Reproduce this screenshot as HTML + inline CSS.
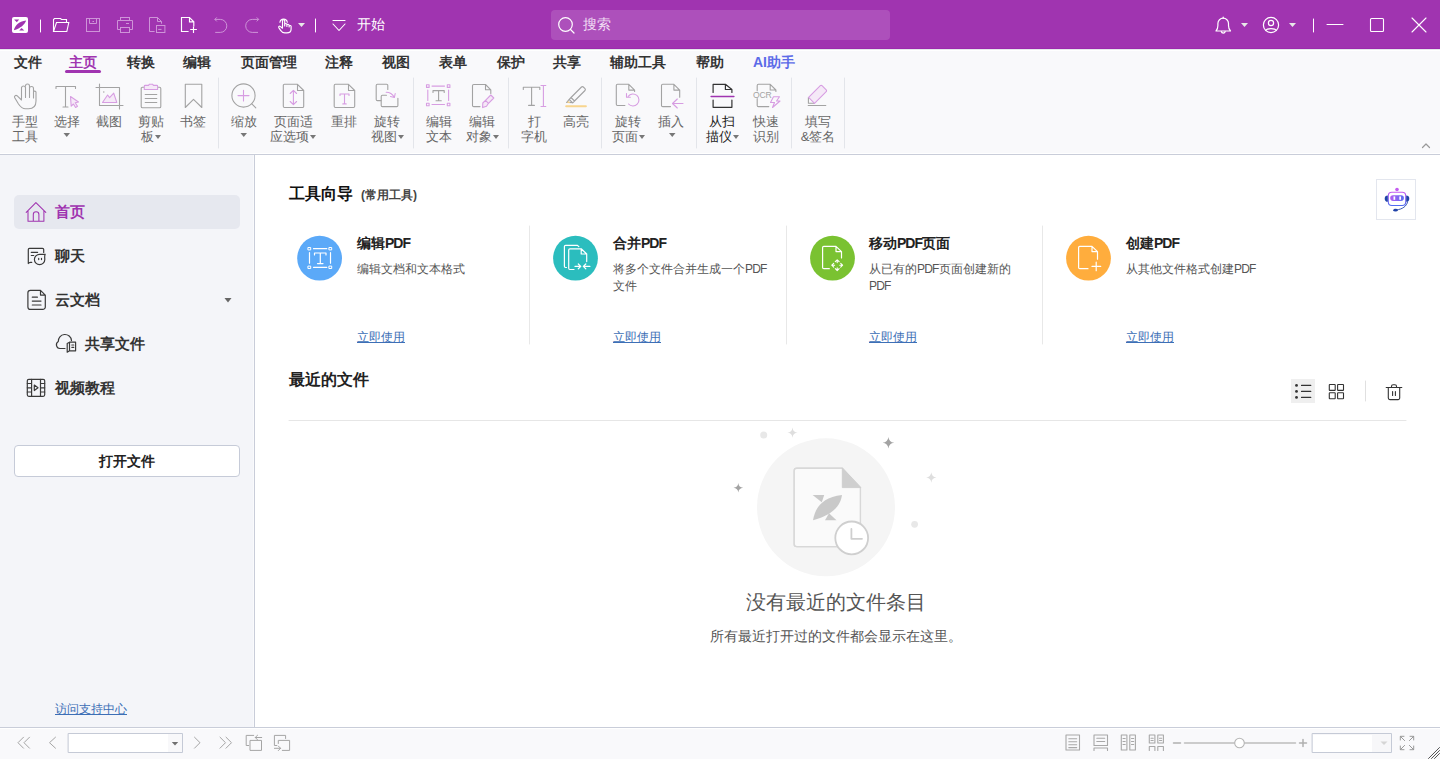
<!DOCTYPE html>
<html><head><meta charset="utf-8">
<style>
*{margin:0;padding:0;box-sizing:border-box}
html,body{width:1440px;height:759px;overflow:hidden;background:#fff;font-family:"Liberation Sans",sans-serif;color:#333}
.abs{position:absolute}
svg{position:absolute;overflow:visible}
#title{left:0;top:0;width:1440px;height:49px;background:#A034B0;border-bottom:1px solid #9C2BAD}
#menu{left:0;top:49px;width:1440px;height:106px;background:#F9F9FB;border-bottom:1px solid #C9CDD9;box-shadow:inset 0 -1px 0 #fff,inset 0 1px 0 #E4E9EA,inset 0 2px 0 #fff}
.tab{position:absolute;top:53px;font-size:14px;font-weight:bold;color:#333;line-height:18px;white-space:nowrap}
.rl{position:absolute;font-size:13px;color:#666;line-height:15px;text-align:center;white-space:nowrap}
.sep{position:absolute;top:78px;width:1px;height:70px;background:#E3E5EA}
#side{left:0;top:155px;width:255px;height:572px;background:#F4F5F9;border-right:1px solid #C9CDD9;box-shadow:inset -1px 0 0 #F9FAFC}
.si{position:absolute;font-size:15px;font-weight:bold;color:#333;line-height:20px;white-space:nowrap}
#status{left:0;top:727px;width:1440px;height:32px;background:#F9F9FB;border-top:1px solid #C9CDD9;box-shadow:inset 0 1px 0 #fff}
.card-t{position:absolute;font-size:14px;font-weight:bold;color:#222;line-height:18px;white-space:nowrap}
.card-d{position:absolute;font-size:12px;color:#555;line-height:17px;width:160px}
.link{position:absolute;font-size:12px;color:#3D6FB6;text-decoration:underline;line-height:16px;white-space:nowrap}
.div{position:absolute;top:226px;width:1px;height:118px;background:#E6E6E6}
.dd{display:inline-block;width:0;height:0;border-left:3.5px solid transparent;border-right:3.5px solid transparent;border-top:4px solid #777;vertical-align:middle;margin-left:1px;margin-top:-2px}
</style></head><body>
<div id="title" class="abs"></div>
<div id="menu" class="abs"></div>
<div id="side" class="abs"></div>
<div id="status" class="abs"></div>

<svg style="left:0;top:0" width="1440" height="48" viewBox="0 0 1440 48" fill="none" stroke-linecap="round" stroke-linejoin="round">
 <!-- logo -->
 <rect x="12" y="17" width="16" height="16" rx="2" fill="#fff"/>
 <g transform="translate(12 17)" fill="#A034B0"><path d="M2.1 2.5 H7.2 L4.8 5.2 Z"/><path d="M1.9 13.2 C2.8 8.6 6.5 4.6 14.2 3.5 C12.6 7.6 8.8 11.2 1.9 13.2 Z"/><path d="M7.2 13.5 H12.3 L9.6 10.9 Z"/></g>
 <line x1="40.5" y1="20" x2="40.5" y2="32" stroke="#fff" stroke-width="1"/>
 <!-- folder -->
 <path d="M53.5 31.5 V19.5 L54.5 18.5 H60.5 L61.5 19.5 H66.5 V22.5" stroke="#fff" stroke-width="1.1" stroke-linecap="butt" stroke-linejoin="miter"/>
 <path d="M53.5 31.5 L56.5 22.5 H68.8 L66.8 31.5 Z" stroke="#fff" stroke-width="1.1" stroke-linejoin="miter"/>
 <!-- save disabled -->
 <g stroke="#CE94D8" stroke-width="1" stroke-linecap="butt" stroke-linejoin="miter">
 <rect x="86.5" y="18.5" width="13" height="13"/>
 <path d="M89.5 18.5 V23.5 H96.5 V18.5"/>
 <line x1="92.5" y1="21.5" x2="94" y2="21.5"/>
 <!-- print -->
 <rect x="120.5" y="17.5" width="9" height="3"/>
 <path d="M120.5 29.5 H117.5 V20.5 H132.5 V29.5 H129.5"/>
 <rect x="120.5" y="27.5" width="9" height="5"/>
 <line x1="126" y1="23.5" x2="129" y2="23.5"/>
 <!-- doc with minus -->
 <path d="M154.6 31.5 H149.5 V17.5 H157.5 L161.5 21.5 V23.7 M157.5 17.5 V21.5 H161.5"/>
 <rect x="156.5" y="25.5" width="8.4" height="7"/>
 <line x1="158.2" y1="29.4" x2="161.5" y2="29.4"/>
 <!-- undo / redo -->
 <path d="M214.8 19.4 H220.3 A6.5 6.5 0 0 1 220.3 32.4 H215.2 M216.8 17.4 L214.8 19.4 L216.8 21.4"/>
 <path d="M258.7 19.4 H252.2 A6.5 6.5 0 0 0 252.2 32.4 H258 M256.7 17.4 L258.7 19.4 L256.7 21.4"/>
 </g>
 <!-- new doc -->
 <path d="M188.6 31.5 H181.5 V17.5 H189.5 L193.8 21.8 V26.6 M189.5 17.5 V21.8 H193.8" stroke="#fff" stroke-width="1.15" stroke-linecap="butt" stroke-linejoin="miter"/>
 <path d="M190.2 29.5 H196.9 M193.5 26.4 V33" stroke="#fff" stroke-width="1.15" stroke-linecap="butt"/>
 <!-- hand -->
 <path d="M282.5 27.5 V20.9 A1.1 1.1 0 0 1 284.7 20.9 V26 M284.7 24.6 A1.1 1.1 0 0 1 286.9 24.6 V26.5 M286.9 25.4 A1.1 1.1 0 0 1 289.1 25.4 V27 M289.1 26.3 A1 1 0 0 1 291.1 26.8 V29.3 C291.1 31.6 289.3 32.9 286.8 32.9 H284.8 C282.8 32.9 281.6 31.9 280.6 30.4 L278.8 27.6 C278.3 26.7 279.3 25.8 280.2 26.4 L282.5 28.2" stroke="#fff" stroke-width="1.15"/>
 <path d="M279.9 22.3 A3.75 3.75 0 0 1 287.3 22.3" stroke="#fff" stroke-width="1.1"/>
 <path d="M298 23 H305 L301.5 27 Z" fill="#E8E8E8" stroke="none"/>
 <line x1="315.5" y1="19" x2="315.5" y2="32" stroke="#fff" stroke-width="1"/>
 <!-- start dropdown -->
 <line x1="333" y1="20.5" x2="345" y2="20.5" stroke="#fff" stroke-width="1.1"/>
 <path d="M333 24 L339 30.5 L345 24" stroke="#fff" stroke-width="1.1"/>
 <!-- search -->
 <rect x="551" y="10" width="339" height="30" rx="4" fill="#FFFFFF" fill-opacity="0.14" stroke="none"/>
 <circle cx="565.5" cy="24.5" r="6.8" stroke="#fff" stroke-width="1.2"/>
 <line x1="570.5" y1="29.5" x2="574" y2="33" stroke="#fff" stroke-width="1.2"/>
 <!-- bell -->
 <path d="M1216 31 H1230.5 C1229 29.5 1228.5 28 1228.5 25.5 V23.5 A5.3 5.3 0 0 0 1217.9 23.5 V25.5 C1217.9 28 1217.5 29.5 1216 31 Z" stroke="#fff" stroke-width="1.2"/>
 <path d="M1221.3 31.5 A2 2 0 0 0 1225.2 31.5" stroke="#fff" stroke-width="1.2"/>
 <line x1="1223.2" y1="17" x2="1223.2" y2="18.3" stroke="#fff" stroke-width="1.2"/>
 <path d="M1241 23 H1248 L1244.5 27 Z" fill="#E8E8E8" stroke="none"/>
 <!-- user -->
 <circle cx="1271" cy="25" r="7.6" stroke="#fff" stroke-width="1.2"/>
 <circle cx="1271" cy="23" r="2.6" stroke="#fff" stroke-width="1.2"/>
 <path d="M1265.8 30.5 C1267 28 1275 28 1276.2 30.5" stroke="#fff" stroke-width="1.2"/>
 <path d="M1289 23 H1296 L1292.5 27 Z" fill="#E8E8E8" stroke="none"/>
 <line x1="1313.5" y1="19" x2="1313.5" y2="32" stroke="#fff" stroke-width="1"/>
 <line x1="1327" y1="24.5" x2="1343" y2="24.5" stroke="#fff" stroke-width="1"/>
 <rect x="1370.5" y="18.5" width="13" height="13" rx="1" stroke="#fff" stroke-width="1.1"/>
 <path d="M1412 18 L1426 32 M1426 18 L1412 32" stroke="#fff" stroke-width="1.1"/>
</svg>
<div class="abs" style="left:357px;top:15px;font-size:14px;color:#fff;line-height:18px">开始</div>
<div class="abs" style="left:583px;top:15px;font-size:14px;color:#F0DDF3;line-height:18px">搜索</div>

<div class="tab" style="left:14px">文件</div>
<div class="tab" style="left:69px;color:#A034B0">主页</div>
<div class="tab" style="left:127px">转换</div>
<div class="tab" style="left:183px">编辑</div>
<div class="tab" style="left:241px">页面管理</div>
<div class="tab" style="left:325px">注释</div>
<div class="tab" style="left:382px">视图</div>
<div class="tab" style="left:439px">表单</div>
<div class="tab" style="left:497px">保护</div>
<div class="tab" style="left:553px">共享</div>
<div class="tab" style="left:610px">辅助工具</div>
<div class="tab" style="left:696px">帮助</div>
<div class="tab" style="left:753px;color:#5C6BE8">AI助手</div>
<div class="abs" style="left:65px;top:70px;width:36px;height:3px;border-radius:2px;background:#A034B0"></div>
<div class="rl" style="left:-25px;top:114px;width:100px;color:#666">手型<br>工具</div>
<div class="rl" style="left:17px;top:114px;width:100px;color:#666">选择</div>
<div class="rl" style="left:59px;top:114px;width:100px;color:#666">截图</div>
<div class="rl" style="left:101px;top:114px;width:100px;color:#666">剪贴<br>板<span class="dd"></span></div>
<div class="rl" style="left:143px;top:114px;width:100px;color:#666">书签</div>
<div class="rl" style="left:194px;top:114px;width:100px;color:#666">缩放</div>
<div class="rl" style="left:243px;top:114px;width:100px;color:#666">页面适<br>应选项<span class="dd"></span></div>
<div class="rl" style="left:294px;top:114px;width:100px;color:#666">重排</div>
<div class="rl" style="left:337px;top:114px;width:100px;color:#666">旋转<br>视图<span class="dd"></span></div>
<div class="rl" style="left:389px;top:114px;width:100px;color:#666">编辑<br>文本</div>
<div class="rl" style="left:432px;top:114px;width:100px;color:#666">编辑<br>对象<span class="dd"></span></div>
<div class="rl" style="left:484px;top:114px;width:100px;color:#666">打<br>字机</div>
<div class="rl" style="left:526px;top:114px;width:100px;color:#666">高亮</div>
<div class="rl" style="left:578px;top:114px;width:100px;color:#666">旋转<br>页面<span class="dd"></span></div>
<div class="rl" style="left:621px;top:114px;width:100px;color:#666">插入</div>
<div class="rl" style="left:672px;top:114px;width:100px;color:#222">从扫<br>描仪<span class="dd"></span></div>
<div class="rl" style="left:716px;top:114px;width:100px;color:#666">快速<br>识别</div>
<div class="rl" style="left:768px;top:114px;width:100px;color:#666">填写<br>&签名</div>

<svg style="left:0;top:0" width="1440" height="759" viewBox="0 0 1440 759" fill="none" stroke-linecap="round" stroke-linejoin="round">
<g stroke="#A3A3A3" stroke-width="1.1">
 <!-- hand -->
 <path d="M21.5 99 V87.5 A2.1 2.1 0 0 1 25.5 87.5 V97.5 M25.5 86 A2 2 0 0 1 29.5 86 V97.5 M29.5 88.5 A2 2 0 0 1 33.5 88.5 V98 M33.5 91.5 A1.6 1.6 0 0 1 36 92 V101 C36 105.5 33.5 108.8 28.5 108.8 H25.5 C22.5 108.8 20.5 107 18.5 104 L14.6 97.5 C14 96.3 15.5 94.8 17 95.7 L21.5 100"/>
 <!-- T select -->
 <path d="M56 88.5 V86.5 H75.5 V88.5 M65.5 86.5 V107 M63 107 H68"/>
 <!-- crop -->
 <path d="M99.5 84 V105.5 H123 M96 87.5 H119.5 V109"/>
 <circle cx="103.8" cy="92" r="0.7" fill="#A3A3A3" stroke="none"/>
 <!-- clipboard -->
 <path d="M144 87.3 H142.5 A1.3 1.3 0 0 0 141.2 88.6 V106.5 A1.3 1.3 0 0 0 142.5 107.8 H159.5 A1.3 1.3 0 0 0 160.8 106.5 V88.6 A1.3 1.3 0 0 0 159.5 87.3 H158"/>
 <path d="M145.2 94.5 H156.8 M145.2 98.5 H156.8 M145.2 102.5 H156.8"/>
 <!-- bookmark -->
 <path d="M185.3 84.3 H201.8 V107.5 L193.5 99.3 L185.3 107.5 Z"/>
 <!-- zoom -->
 <circle cx="243.5" cy="95.5" r="11.6"/>
 <path d="M251.8 103.8 L255.8 107.8"/>
 <!-- page fit -->
 <path d="M297.5 84.3 H284.5 A1.2 1.2 0 0 0 283.3 85.5 V106.3 A1.2 1.2 0 0 0 284.5 107.5 H302.5 A1.2 1.2 0 0 0 303.7 106.3 V90.5 Z M297.5 84.3 V90.5 H303.7"/>
 <!-- reflow -->
 <path d="M348.5 84.3 H335.4 A1.2 1.2 0 0 0 334.2 85.5 V106.3 A1.2 1.2 0 0 0 335.4 107.5 H353.5 A1.2 1.2 0 0 0 354.7 106.3 V90.5 Z M348.5 84.3 V90.5 H354.7"/>
 <!-- rotate view -->
 <path d="M381 100.6 H377.4 A1.2 1.2 0 0 1 376.2 99.4 V85.5 A1.2 1.2 0 0 1 377.4 84.3 H386.6 A1.2 1.2 0 0 1 387.8 85.5 V89.5"/>
 <path d="M386.5 95.3 H382.4 A1.2 1.2 0 0 0 381.2 96.5 V105.4 A1.2 1.2 0 0 0 382.4 106.6 H396.7 A1.2 1.2 0 0 0 397.9 105.4 V98.3"/>
 <!-- edit text T -->
 <path d="M433 92.5 V90.6 H444.2 V92.5 M438.6 90.6 V100.7 M436 100.7 H441.3"/>
 <!-- edit object doc -->
 <path d="M480 106.6 H473.7 A1.2 1.2 0 0 1 472.5 105.4 V85.7 A1.2 1.2 0 0 1 473.7 84.5 H485.5 L490.8 89.8 V93.5 M485.5 84.5 V89.8 H490.8"/>
 <!-- typewriter T -->
 <path d="M523.3 89.5 V87.3 H539.8 V89.5 M531.6 87.3 V105.4 M528.6 105.4 H534.4"/>
 <!-- highlighter -->
 <path d="M571 97.5 L581.5 87 A1.3 1.3 0 0 1 583.3 87 L585 88.7 A1.3 1.3 0 0 1 585 90.5 L574.5 101 Z M571 97.5 L569.2 99.3 L572.7 102.8 L574.5 101 M569.2 99.3 L566.6 102.5 L569.8 102.4 L572.7 102.8"/>
 <!-- rotate page doc -->
 <path d="M624.9 105.5 H617.5 A1.2 1.2 0 0 1 616.3 104.3 V85.5 A1.2 1.2 0 0 1 617.5 84.3 H628.8 L634.6 90.1 V91.5 M628.8 84.3 V90.1 H634.6"/>
 <!-- insert doc -->
 <path d="M670.5 106.6 H662.7 A1.2 1.2 0 0 1 661.5 105.4 V85.5 A1.2 1.2 0 0 1 662.7 84.3 H673.9 L679.7 90.1 V97.2 M673.9 84.3 V90.1 H679.7"/>
 <!-- OCR doc -->
 <path d="M757.2 90.8 V85.5 A1.2 1.2 0 0 1 758.4 84.3 H770.2 L775.9 90 V91.5 M770.2 84.3 V90 H775.9 M757.2 98.5 V105.4 A1.2 1.2 0 0 0 758.4 106.6 H768.8"/>
 <!-- fill sign base -->
 <path d="M808.2 105.5 H825.8 M808.4 97.6 V103.3 H814.2"/>
</g>
<g stroke="#D79DE2" stroke-width="1.1">
 <path d="M70.5 96.5 L78.5 102 L75.2 102.8 L77.5 106.3 L75.6 107.5 L73.4 104 L71.2 106.2 Z" fill="#F5E9F7"/>
 <path d="M102.5 102.5 L107.6 95 L109.6 97.7 L113.7 93.2 L116.8 102.5 Z" fill="#F5E9F7"/>
 <path d="M144.3 89.5 V86.2 A0.8 0.8 0 0 1 145.1 85.4 H148.5 L149.5 84.2 H152.5 L153.5 85.4 H156.8 A0.8 0.8 0 0 1 157.6 86.2 V89.5 Z" fill="#F5E9F7"/>
 <path d="M238 95.6 H249 M243.5 90.2 V101"/>
 <path d="M293.4 90.5 V104.5 M290.2 93.5 L293.4 90.3 L296.6 93.5 M290.2 101.5 L293.4 104.7 L296.6 101.5"/>
 <path d="M340 95.5 V94 H349 V95.5 M344.5 94 V103.9 M342.8 103.9 H346.2"/>
 <path d="M386.2 92.2 C389.5 92.2 392.5 94 394.3 97.3 M390.5 96.5 L394.4 97.5 L395.2 93.5"/>
 <path d="M432 86.1 H444.5 M432 104.5 H444.5 M427.8 90 V100.5 M448.6 90 V100.5"/>
 <rect x="426.5" y="84.8" width="2.6" height="2.6"/><rect x="447.3" y="84.8" width="2.6" height="2.6"/>
 <rect x="426.5" y="103.2" width="2.6" height="2.6"/><rect x="447.3" y="103.2" width="2.6" height="2.6"/>
 <path d="M485.5 100.3 L490.8 95 L493.8 98 L488.5 103.3 Z M485.5 100.3 L482.8 103 L482.6 107.6 L486.5 106.3 L488.5 103.3" fill="#F5E9F7"/>
 <path d="M543.4 85.5 V106.5 M541 85.5 H545.8 M541 106.5 H545.8"/>
 <path d="M628.2 96.3 A6 6 0 1 1 628.5 104" /><path d="M626.5 93.5 V97.3 H630.3"/>
 <path d="M672.5 103.5 H683 M677.3 99 L672.5 103.5 L677.3 108"/>
 <path d="M773.5 96.8 H779.5 L776.5 101 H780 L772.5 107.5 L774.5 102.5 H770.5 Z"/>
 <path d="M808.6 97.4 L820.3 85.7 A1.2 1.2 0 0 1 822 85.7 L826.2 89.9 A1.2 1.2 0 0 1 826.2 91.6 L814.5 103.3 Z" fill="#F5E9F7"/>
</g>
<path d="M566.2 106.2 H585.9" stroke="#F8D58E" stroke-width="2"/>
<path d="M568 100.8 L570.5 103.3 L567.2 103" fill="#F8D58E"/>
<!-- scan dark -->
<g stroke="#333" stroke-width="1.2">
 <path d="M713.1 92.5 V84.3 H725.4 L731.9 89.5 V92.5 M725.4 84.3 V89.5 H731.9 M713.1 100 V107.3 H731.9 V100"/>
</g>
<path d="M711.1 96.4 H733.9" stroke="#A034B0" stroke-width="1.5"/>
<text x="753" y="97.6" font-family="Liberation Sans" font-size="8.6" fill="#A3A3A3" letter-spacing="-0.2">OCR</text>
<!-- separators -->
<g stroke="#E3E5EA" stroke-width="1">
 <path d="M218.5 78 V148 M413.5 78 V148 M508.5 78 V148 M601.5 78 V148 M696.5 78 V148 M791.5 78 V148 M844.5 78 V148"/>
</g>
<!-- dropdown triangles -->
<g fill="#777">
 <path d="M63.5 133 H70 L66.75 137 Z"/>
 <path d="M240.5 133 H247 L243.75 137 Z"/>
 <path d="M669 133 H675.5 L672.25 137 Z"/>
</g>
</svg>

<div class="abs" style="left:14px;top:195px;width:226px;height:34px;border-radius:5px;background:#E6E8EF"></div>
<div class="abs" style="left:14px;top:445px;width:226px;height:32px;border-radius:4px;background:#fff;border:1px solid #C6CBD8"></div>
<div class="abs" style="left:1376px;top:179px;width:40px;height:41px;background:#fff;border:1px solid #E3E6EE"></div>
<div class="abs" style="left:1291px;top:379px;width:24px;height:24px;background:#EFEFEF"></div>
<svg style="left:0;top:0" width="1440" height="759" viewBox="0 0 1440 759" fill="none" stroke-linecap="round" stroke-linejoin="round">
 <!-- home -->
 <path d="M26.2 212.4 L35.9 202.6 L45.8 212.4 M28 210.5 V221.3 H43.9 V210.5 M33.3 221.3 V214.5 A2.8 2.8 0 0 1 38.9 214.5 V221.3" stroke="#A034B0" stroke-width="1.05"/>
 <g stroke="#3A3A3A" stroke-width="1.2">
 <!-- chat -->
 <path d="M31.8 262.3 H30.5 C29.5 262.3 28.7 262.8 28.3 263.5 V249.6 A1.2 1.2 0 0 1 29.5 248.4 H42.5 A1.2 1.2 0 0 1 43.7 249.6 V252.5"/>
 <path d="M31.3 252.4 H37.6 M31.3 255.5 H33.7"/>
 <path d="M45.2 254.3 H39.6 A5.2 5.2 0 1 0 44.8 259.5 C44.8 257.5 44.3 255.8 45.2 254.3 Z"/>
 <path d="M38.7 258.4 V259.6 M41.5 258.4 V259.6"/>
 <!-- doc -->
 <path d="M40.5 290.3 H30.4 A2.5 2.5 0 0 0 27.9 292.8 V306.9 A2.5 2.5 0 0 0 30.4 309.4 H42.8 A2.5 2.5 0 0 0 45.3 306.9 V295.1 Z M40.5 290.3 V295.1 H45.3"/>
 <path d="M32.3 297.2 H37.4 M32.3 301.1 H41 M32.3 305 H41"/>
 <!-- cloud -->
 <path d="M65 348.5 H59.8 A3.7 3.7 0 0 1 58.3 341.6 A6.6 6.6 0 0 1 71.5 340.6"/>
 <path d="M67.2 343.5 L69.5 342.2 H75.6 V350.8 H69.5 L67.2 352.2 Z M69.5 342.2 V350.8 M71.8 345 H73.8 M71.8 347.3 H73.8"/>
 <!-- film -->
 <rect x="27.3" y="379.3" width="17.4" height="17" rx="1.5"/>
 <path d="M31.6 379.3 V396.3 M40.5 379.3 V396.3 M27.3 383.5 H31.6 M27.3 387.8 H31.6 M27.3 392 H31.6 M40.5 383.5 H44.7 M40.5 387.8 H44.7 M40.5 392 H44.7"/>
 <path d="M34.3 385 L38 387.8 L34.3 390.5 Z"/>
 </g>
 
 <path d="M224.5 298 H231.5 L228 302.5 Z" fill="#666"/>
 <!-- card icons -->
 <circle cx="319.6" cy="258.2" r="22.4" fill="#5BA9F8"/>
 <circle cx="575.5" cy="258.2" r="22.4" fill="#2BBDBE"/>
 <circle cx="832.5" cy="258.2" r="22.4" fill="#7AC231"/>
 <circle cx="1088.5" cy="258.2" r="22.4" fill="#FFAD3D"/>
 <g stroke="#fff" stroke-width="1.2">
  <rect x="308.3" y="247.5" width="2.4" height="2.4" stroke-width="1"/><rect x="329.3" y="247.5" width="2.4" height="2.4" stroke-width="1"/>
  <rect x="308.3" y="266.1" width="2.4" height="2.4" stroke-width="1"/><rect x="329.3" y="266.1" width="2.4" height="2.4" stroke-width="1"/>
  <path d="M313.5 248.7 H326.8 M313.5 267.3 H326.8 M309.5 252.5 V263.2 M330.5 252.5 V263.2"/>
  <path d="M314.5 255 V253 H326 V255 M320.3 253 V263.6 M317.5 263.6 H323"/>
  <path d="M566.5 267.5 H565.6 A1.2 1.2 0 0 1 564.4 266.3 V246.6 A1.2 1.2 0 0 1 565.6 245.4 H577.5 L578.8 246.7"/>
  <path d="M574 269.5 H569.9 A1.2 1.2 0 0 1 568.7 268.3 V250 A1.2 1.2 0 0 1 569.9 248.8 H581.2 L586.7 254 V261.6 M581.2 248.8 V254 H586.7"/>
  <path d="M575 266.4 H580.5 M578.3 264 L580.8 266.4 L578.3 268.8 M589.9 266.4 H583.5 M585.8 264 L583.3 266.4 L585.8 268.8"/>
  <path d="M829.3 268.7 H823.8 A1.2 1.2 0 0 1 822.6 267.5 V247.6 A1.2 1.2 0 0 1 823.8 246.4 H836 L841.5 251.6 V258 M836 246.4 V251.6 H841.5"/>
  <path d="M837.2 259.8 V262.6 M837.2 267.8 V270.6 M831.8 265.2 H834.6 M839.8 265.2 H842.6 M835.3 261.7 L837.2 259.8 L839.1 261.7 M835.3 268.7 L837.2 270.6 L839.1 268.7 M833.7 263.3 L831.8 265.2 L833.7 267.1 M840.7 263.3 L842.6 265.2 L840.7 267.1" stroke-width="1.1"/>
  <path d="M1088 268.7 H1079.8 A1.2 1.2 0 0 1 1078.6 267.5 V247.6 A1.2 1.2 0 0 1 1079.8 246.4 H1092 L1097.5 251.6 V259.2 M1092 246.4 V251.6 H1097.5"/>
  <path d="M1092 266.4 H1100.7 M1096.2 262.2 V270.7"/>
 </g>
 <!-- robot -->
 <defs><linearGradient id="rg" x1="0" y1="0" x2="0" y2="1"><stop offset="0" stop-color="#C45BF0"/><stop offset="1" stop-color="#4F6BF2"/></linearGradient>
 <linearGradient id="rg2" x1="0" y1="0" x2="1" y2="0"><stop offset="0" stop-color="#B45CF2"/><stop offset="1" stop-color="#5B6EF2"/></linearGradient></defs>
 <circle cx="1397" cy="189.5" r="1.8" fill="#C45BF0"/>
 <rect x="1388.3" y="192.2" width="17.4" height="13.3" rx="3.5" stroke="url(#rg)" stroke-width="1.1"/>
 <rect x="1390.2" y="195.2" width="13.7" height="5.7" rx="2.8" fill="url(#rg2)"/>
 <rect x="1393.5" y="196.4" width="1.7" height="3.4" fill="#fff"/><rect x="1399.3" y="196.4" width="1.7" height="3.4" fill="#fff"/>
 <path d="M1387.8 195.6 A3 3 0 0 0 1387.8 201.8 Z" fill="#2143A8"/>
 <path d="M1406.2 195.6 A3 3 0 0 1 1406.2 201.8 Z" fill="#2143A8"/>
 <path d="M1407.5 202 C1407 206 1402 209.5 1397 209.8" stroke="#2143A8" stroke-width="0.9"/>
 <ellipse cx="1395.5" cy="210.2" rx="2.2" ry="1.4" fill="#2143A8"/>
 <!-- recent icons -->
 <g fill="#333"><circle cx="1296.5" cy="385.4" r="1.4"/><circle cx="1296.5" cy="391.4" r="1.4"/><circle cx="1296.5" cy="397.4" r="1.4"/></g>
 <path d="M1301.5 385.4 H1310.8 M1301.5 391.4 H1310.8 M1301.5 397.4 H1310.8" stroke="#333" stroke-width="1.1"/>
 <g stroke="#333" stroke-width="1.1"><rect x="1329.3" y="384.5" width="5.9" height="5.9" rx="0.5"/><rect x="1337.6" y="384.5" width="5.9" height="5.9" rx="0.5"/><rect x="1329.3" y="392.8" width="5.9" height="5.9" rx="0.5"/><rect x="1337.6" y="392.8" width="5.9" height="5.9" rx="0.5"/>
 <path d="M1386.2 387.5 H1401.8 M1391.5 387.5 V386.3 A1.6 1.6 0 0 1 1393.1 384.7 H1394.9 A1.6 1.6 0 0 1 1396.5 386.3 V387.5 M1388.3 387.5 V398 A1.6 1.6 0 0 0 1389.9 399.6 H1398.1 A1.6 1.6 0 0 0 1399.7 398 V387.5 M1392.6 391.5 V395.5 M1395.4 391.5 V395.5"/></g>
 <path d="M1365.5 381 V401" stroke="#E0E0E0" stroke-width="1"/>
 <path d="M289 420.5 H1406" stroke="#E6E6E6" stroke-width="1"/>
 <!-- card dividers -->
 <path d="M529.5 226 V344 M786.5 226 V344 M1042.5 226 V344" stroke="#E8E8E8" stroke-width="1"/>
 <!-- empty state -->
 <circle cx="826" cy="507.3" r="69" fill="#F5F5F5"/>
 <path d="M842.3 468.3 H796.7 A2.5 2.5 0 0 0 794.2 470.8 V544.1 A2.5 2.5 0 0 0 796.7 546.6 H840 M857.9 530 V487.6" stroke="#D8D8D8" stroke-width="1.4" fill="none"/>
 <path d="M796.7 468.3 H842.3 L860.4 487.6 V544.1 A2.5 2.5 0 0 1 857.9 546.6 H796.7 A2.5 2.5 0 0 1 794.2 544.1 V470.8 A2.5 2.5 0 0 1 796.7 468.3 Z" fill="#FAFAFA" stroke="#D8D8D8" stroke-width="1.4"/>
 <path d="M842.3 468.3 V487.6 H860.4 Z" fill="#CFCFCF" stroke="#CFCFCF" stroke-width="1"/>
 <g fill="#C9C9C9"><path d="M812.6 494.9 H824.2 L821.8 502.3 Z"/><path d="M813 520.2 C815.5 507 822 497.5 842 494.9 C840.5 505 834 514.5 813 520.2 Z"/><path d="M825 520.2 H836.5 L829 513.2 Z"/></g>
 <circle cx="851.7" cy="537.9" r="16.4" fill="#fff" stroke="#CFCFCF" stroke-width="1.8"/>
 <path d="M851.4 529 V538.8 H862" stroke="#CFCFCF" stroke-width="1.8"/>
 <path d="M888.4 436.9 Q888.92 442.18 894.1999999999999 442.7 Q888.92 443.22 888.4 448.5 Q887.88 443.22 882.6 442.7 Q887.88 442.18 888.4 436.9 Z M738.3 482.9 Q738.73 487.27 743.0999999999999 487.7 Q738.73 488.13 738.3 492.5 Q737.87 488.13 733.5 487.7 Q737.87 487.27 738.3 482.9 Z" fill="#A3A3A3"/>
 <path d="M792.5 427.40000000000003 Q792.97 432.13 797.7 432.6 Q792.97 433.07 792.5 437.8 Q792.03 433.07 787.3 432.6 Q792.03 432.13 792.5 427.40000000000003 Z M931.3 472.3 Q931.77 477.03 936.5 477.5 Q931.77 477.97 931.3 482.7 Q930.83 477.97 926.0999999999999 477.5 Q930.83 477.03 931.3 472.3 Z" fill="#DEDEDE"/>
 <circle cx="763.7" cy="435.1" r="3.5" fill="#E8E8E8"/><circle cx="914.6" cy="524.3" r="3.4" fill="#E8E8E8"/>
 <!-- status bar icons -->
 <g stroke="#A5A5A5" stroke-width="1">
  <path d="M23.5 737.2 L18 742.7 L23.5 748.2 M29.5 737.2 L24 742.7 L29.5 748.2"/>
  <path d="M55.5 737.2 L49.5 742.7 L55.5 748.2"/>
  <path d="M194.5 737.2 L200 742.7 L194.5 748.2"/>
  <path d="M220 737.2 L225.5 742.7 L220 748.2 M226 737.2 L231.5 742.7 L226 748.2"/>
  <path d="M253.7 735.4 H246.2 V745.5 H248.7 M250.4 740.4 H261.5 V750.4 H250.4 Z M261.7 737.5 H255.2 M257.6 735.2 L255.2 737.5 L257.6 739.8"/>
  <path d="M285.6 738.5 V735.4 H274.4 V745.5 H276.7 M278.3 743.5 V740.4 H289.6 V750.4 H282.3 M274.4 748.3 H280.6 M278.3 746 L280.6 748.3 L278.3 750.6"/>
 </g>
 <rect x="68.5" y="733.5" width="114" height="19" fill="#F8F8FA" stroke="#C5CAD6" stroke-width="1"/><rect x="69" y="734" width="99" height="18" fill="#fff"/>
 <path d="M171.8 742 H178.2 L175 745.5 Z" fill="#707070"/>
 <g stroke="#A8A8A8" stroke-width="1.1">
  <rect x="1066" y="735" width="13.5" height="15"/><path d="M1068.8 738.8 H1076.7 M1068.8 741.8 H1076.7 M1068.8 744.8 H1076.7 M1068.8 747.6 H1076.7"/>
  <path d="M1094 735 H1107.5 V745.5 H1094 Z M1096.8 738.3 H1104.7 M1096.8 741.5 H1104.7 M1094 748 H1107.5 V750.5 M1094 750.5 V748"/>
  <rect x="1121.3" y="735" width="5.6" height="15"/><rect x="1129.8" y="735" width="5.6" height="15"/>
  <path d="M1123 738.5 H1125.2 M1123 741.5 H1125.2 M1123 744.5 H1125.2 M1131.5 738.5 H1133.7 M1131.5 741.5 H1133.7 M1131.5 744.5 H1133.7"/>
  <rect x="1149.3" y="735" width="5.6" height="8"/><rect x="1157.8" y="735" width="5.6" height="8"/>
  <path d="M1149.3 750.5 V746.5 H1154.9 V750.5 M1157.8 750.5 V746.5 H1163.4 V750.5 M1151 738.3 H1153.2 M1151 740.5 H1153.2 M1159.5 738.3 H1161.7 M1159.5 740.5 H1161.7"/>
 </g>
 <path d="M1173.5 743 H1180.5 M1299.5 743 H1306.5 M1303 739.5 V746.5" stroke="#B0B0B0" stroke-width="1.5"/>
 <path d="M1184.5 743 H1295.5" stroke="#BDBDBD" stroke-width="1.5"/>
 <circle cx="1239.5" cy="743" r="4.8" fill="#fff" stroke="#B5B5B5" stroke-width="1.1"/>
 <rect x="1312.5" y="733.5" width="79" height="19" fill="#F7F7F9" stroke="#C5CAD6" stroke-width="1"/><rect x="1313" y="735" width="59" height="17" fill="#fff"/>
 <path d="M1380.5 741.5 H1387.5 L1384 745 Z" fill="#D5D5D5"/>
 <g stroke="#999" stroke-width="1">
  <path d="M1404.6 740.6 L1400.3 736.3 M1400.3 740 V736.3 H1404 M1409.4 740.6 L1413.7 736.3 M1413.7 740 V736.3 H1410 M1404.6 745.4 L1400.3 749.7 M1400.3 746 V749.7 H1404 M1409.4 745.4 L1413.7 749.7 M1413.7 746 V749.7 H1410"/>
 </g>
 <g stroke="#555" stroke-width="1"><path d="M1428.5 758.5 L1439.5 747.5 M1431.5 758.5 L1439.5 750.5 M1434.5 758.5 L1439.5 753.5"/></g>
 <path d="M1422.5 147.5 L1426 144 L1429.5 147.5" stroke="#999" stroke-width="1.2"/>
</svg>
<div class="si" style="left:55px;top:202px;color:#A034B0">首页</div>
<div class="si" style="left:55px;top:246px">聊天</div>
<div class="si" style="left:55px;top:290px">云文档</div>
<div class="si" style="left:85px;top:334px">共享文件</div>
<div class="si" style="left:55px;top:378px">视频教程</div>
<div class="abs" style="left:14px;top:451px;width:226px;text-align:center;font-size:14px;font-weight:bold;color:#222;line-height:20px">打开文件</div>
<div class="link" style="left:55px;top:701px">访问支持中心</div>
<div class="abs" style="left:289px;top:183px;font-size:16px;font-weight:bold;color:#111;line-height:22px;white-space:nowrap">工具向导<span style="font-size:12px;margin-left:8px;color:#444">(常用工具)</span></div>
<div class="card-t" style="left:357px;top:234px">编辑<span style="letter-spacing:-1px">PDF</span></div>
<div class="card-d" style="left:357px;top:261px">编辑文档和文本格式</div>
<div class="link" style="left:357px;top:329px">立即使用</div>
<div class="card-t" style="left:613px;top:234px">合并<span style="letter-spacing:-1px">PDF</span></div>
<div class="card-d" style="left:613px;top:261px">将多个文件合并生成一个<span style="letter-spacing:-0.8px">PDF</span>文件</div>
<div class="link" style="left:613px;top:329px">立即使用</div>
<div class="card-t" style="left:869px;top:234px">移动<span style="letter-spacing:-1px">PDF</span>页面</div>
<div class="card-d" style="left:869px;top:261px">从已有的<span style="letter-spacing:-0.8px">PDF</span>页面创建新的<span style="letter-spacing:-0.8px">PDF</span></div>
<div class="link" style="left:869px;top:329px">立即使用</div>
<div class="card-t" style="left:1126px;top:234px">创建<span style="letter-spacing:-1px">PDF</span></div>
<div class="card-d" style="left:1126px;top:261px">从其他文件格式创建<span style="letter-spacing:-0.8px">PDF</span></div>
<div class="link" style="left:1126px;top:329px">立即使用</div>
<div class="abs" style="left:289px;top:369px;font-size:16px;font-weight:bold;color:#222;line-height:22px;white-space:nowrap">最近的文件</div>
<div class="abs" style="left:636px;top:589px;width:400px;text-align:center;font-size:20px;color:#555;line-height:26px">没有最近的文件条目</div>
<div class="abs" style="left:636px;top:626px;width:400px;text-align:center;font-size:14px;color:#555;line-height:20px">所有最近打开过的文件都会显示在这里。</div>
</body></html>
